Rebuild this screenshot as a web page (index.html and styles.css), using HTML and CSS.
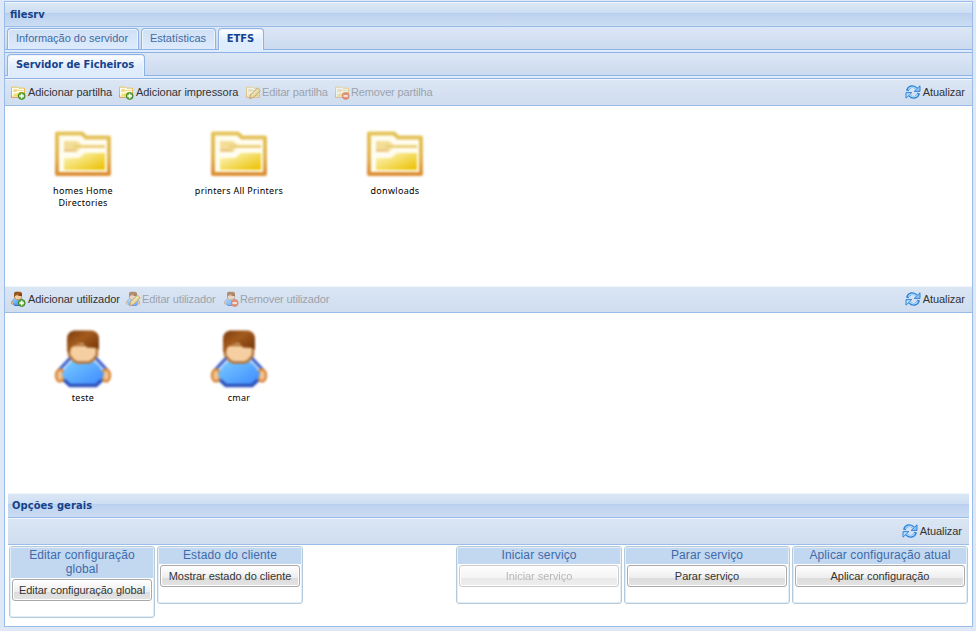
FILE: index.html
```html
<!DOCTYPE html>
<html lang="pt">
<head>
<meta charset="utf-8">
<title>filesrv</title>
<link rel="stylesheet" href="styles.css">
</head>
<body>
<svg class="defs" aria-hidden="true">
  <defs>
    <linearGradient id="gold" x1="0" y1="0" x2="0" y2="1"><stop offset="0" stop-color="#e5c45a"/><stop offset=".6" stop-color="#e2b455"/><stop offset="1" stop-color="#dc8f35"/></linearGradient>
    <linearGradient id="yellow" x1="0" y1="0" x2="1" y2="1"><stop offset=".1" stop-color="#fbf3b4"/><stop offset=".9" stop-color="#edc50f"/></linearGradient>
    <linearGradient id="shirt" x1="0" y1="0" x2="1" y2="1"><stop offset="0" stop-color="#79ccff"/><stop offset="1" stop-color="#3a87ff"/></linearGradient>
    <linearGradient id="hair" x1="0" y1="0" x2="1" y2="1"><stop offset="0" stop-color="#7c3b0c"/><stop offset=".4" stop-color="#a35a1c"/><stop offset="1" stop-color="#6b3005"/></linearGradient>
    <symbol id="folder" viewBox="0 0 64 64">
      <path d="M6 12.500H31L35 16.500H58V53H6Z" fill="#fffdf0" stroke="url(#gold)" stroke-width="4" stroke-linejoin="round"/>
      <path d="M13 20H26L31 24H54V27H29L26 31H13Z" fill="#f3de98"/>
      <path d="M22 25.500H54" stroke="#ecd07c" stroke-width="3"/>
      <path d="M13 29.500H25" stroke="#edc888" stroke-width="3"/>
      <path d="M13 37H28L34 32H54V49H13Z" fill="url(#yellow)"/>
    </symbol>
    <symbol id="user" viewBox="0 0 64 64">
      <path d="M20 29L8 42V50H56V42L44 29Z" fill="#c4dcfb" stroke="#3e62ca" stroke-width="3"/>
      <ellipse cx="9" cy="47.500" rx="4" ry="6" fill="#f0c394" stroke="#d98a3c" stroke-width="2.500"/>
      <ellipse cx="55" cy="47.500" rx="4" ry="6" fill="#f0c394" stroke="#d98a3c" stroke-width="2.500"/>
      <path d="M22 33H42L48 38L53 46L49 56L45 58.500H19L15 56L11 46L16 38Z" fill="url(#shirt)"/>
      <path d="M13 52L19 57.500H45L51 52" fill="none" stroke="#2f52bb" stroke-width="3.500"/>
      <path d="M18 17H46V27L42 32L38 34.500H26L22 32L18 27Z" fill="#f5cfa2" stroke="#b37338" stroke-width="2.500"/>
      <path d="M23 2.500H41Q48 3.500 48 11V22L46 20L36 19.500L32 15L25 16L20 20L18 26L16 23V11Q16 3.500 23 2.500Z" fill="url(#hair)"/>
    </symbol>
    <symbol id="refresh" viewBox="0 0 16 16">
      <path d="M2.300 6.800C3.500 2 8.500 1.200 11.700 4.600" fill="none" stroke="#2f83da" stroke-width="2.700"/>
      <path d="M15 1.800V7.400H9.200Z" fill="#8cc6f8" stroke="#2779d0" stroke-width=".9"/>
      <path d="M3.200 5.600C5 2.600 8.600 2.400 11.400 5" fill="none" stroke="#a9dcff" stroke-width="1.200"/>
      <path d="M13.700 9.200C12.500 14 7.500 14.800 4.300 11.400" fill="none" stroke="#2f83da" stroke-width="2.700"/>
      <path d="M1 14.200V8.600H6.800Z" fill="#b5ddfb" stroke="#2779d0" stroke-width=".9"/>
      <path d="M12.800 10.400C11 13.400 7.400 13.600 4.600 11" fill="none" stroke="#a9dcff" stroke-width="1.200"/>
    </symbol>
    <symbol id="plus" viewBox="0 0 16 16"><circle cx="11.700" cy="12" r="3.400" fill="#76b852" stroke="#3c8425"/><path d="M9.500 12H13.900M11.700 9.800V14.200" stroke="#fff" stroke-width="1.300"/></symbol>
    <symbol id="minus" viewBox="0 0 16 16"><circle cx="11.700" cy="12" r="3.400" fill="#f0622c" stroke="#d9501f"/><path d="M9.500 12H13.900" stroke="#fff" stroke-width="1.600"/></symbol>
    <symbol id="pencil" viewBox="0 0 16 16"><path d="M4.500 14.800L5.800 10.600L12.300 4.100L15.200 6.800L8.600 13.400Z" fill="#f5d568" stroke="#bd8127"/><path d="M7 11.500L13 5.500" stroke="#fff2a6"/></symbol>
  </defs>
</svg>

<div class="window">
  <div class="title">filesrv</div>
  <div class="tabs">
    <div class="tab info"><span>Informação do servidor</span></div>
    <div class="tab stats"><span>Estatísticas</span></div>
    <div class="tab active etfs"><span>ETFS</span></div>
  </div>
  <div class="spacer"></div>
  <div class="tabs second">
    <div class="tab active files"><span>Servidor de Ficheiros</span></div>
  </div>
  <div class="spacer"></div>

  <div class="toolbar">
    <div class="tool w108"><svg><use href="#folder"/><use href="#plus"/></svg><span>Adicionar partilha</span></div>
    <div class="tool w127"><svg><use href="#folder"/><use href="#plus"/></svg><span>Adicionar impressora</span></div>
    <div class="tool w89 disabled"><svg><use href="#folder"/><use href="#pencil"/></svg><span>Editar partilha</span></div>
    <div class="tool disabled"><svg><use href="#folder"/><use href="#minus"/></svg><span>Remover partilha</span></div>
    <div class="tool refresh"><svg><use href="#refresh"/></svg><span>Atualizar</span></div>
  </div>
  <div class="items shares">
    <div class="item"><svg><use href="#folder"/></svg><span>homes Home Directories</span></div>
    <div class="item"><svg><use href="#folder"/></svg><span>printers All Printers</span></div>
    <div class="item"><svg><use href="#folder"/></svg><span>donwloads</span></div>
  </div>

  <div class="toolbar">
    <div class="tool w115"><svg><use href="#user"/><use href="#plus"/></svg><span>Adicionar utilizador</span></div>
    <div class="tool w98 disabled"><svg><use href="#user"/><use href="#pencil"/></svg><span>Editar utilizador</span></div>
    <div class="tool disabled"><svg><use href="#user"/><use href="#minus"/></svg><span>Remover utilizador</span></div>
    <div class="tool refresh"><svg><use href="#refresh"/></svg><span>Atualizar</span></div>
  </div>
  <div class="items users">
    <div class="item"><svg><use href="#user"/></svg><span>teste</span></div>
    <div class="item"><svg><use href="#user"/></svg><span>cmar</span></div>
  </div>

  <div class="options">
    <div class="title">Opções gerais</div>
    <div class="toolbar"><div class="tool refresh"><svg><use href="#refresh"/></svg><span>Atualizar</span></div></div>
    <div class="groups">
      <div class="group"><h3>Editar configuração global</h3><button>Editar configuração global</button></div>
      <div class="group"><h3>Estado do cliente</h3><button>Mostrar estado do cliente</button></div>
      <div class="gap"></div>
      <div class="group"><h3>Iniciar serviço</h3><button disabled>Iniciar serviço</button></div>
      <div class="group"><h3>Parar serviço</h3><button>Parar serviço</button></div>
      <div class="group"><h3>Aplicar configuração atual</h3><button>Aplicar configuração</button></div>
    </div>
  </div>
</div>
</body>
</html>
```

FILE: styles.css
```css
* { box-sizing: border-box; }
body { margin: 0; height: 631px; padding: 1px 3px 4px 4px; overflow: hidden; background: #dfe8f6; font: 11px "Liberation Sans", Arial, sans-serif; color: #333; }
.defs { position: absolute; width: 0; height: 0; }
.window { width: 969px; height: 626px; border: 1px solid #99bce8; background: #fff; }
.title { height: 25px; padding: 1px 5px 0; border-bottom: 1px solid #99bce8; background: linear-gradient(#dce8f5, #cddef3 45%, #b3cbec 46%, #bdd2ef 50%, #cbddf3); box-shadow: inset 0 1px #f0f5fb; font: bold 11px/24px "DejaVu Sans Condensed", "DejaVu Sans", sans-serif; color: #15428b; }
.options .title { padding-left: 4px; letter-spacing: .1px; }
.tabs { display: flex; gap: 2px; height: 23px; padding: 1px 2px 0; border-bottom: 1px solid #8db2e3; background: linear-gradient(#dde7f6, #cbdaee); }
.tab { height: 21px; border: 1px solid #8db2e3; border-bottom: 0; border-radius: 4px 4px 0 0; background: linear-gradient(#cfdff5, #deebfd); box-shadow: inset 1px 1px #edf4fd, inset -1px 0 #edf4fd; line-height: 19px; text-align: center; letter-spacing: -.02px; color: #416aa3; }
.tabs .active { height: 22px; margin-bottom: -1px; background: linear-gradient(#fff, #deecfd 60%); font: bold 11px/19px "DejaVu Sans Condensed", "DejaVu Sans", sans-serif; letter-spacing: -.03px; color: #15428b; }
.info { width: 132px; padding-right: 2px; }
.stats { width: 75px; padding-right: 1px; }
.etfs { width: 46px; padding-right: 1px; }
.files { width: 138px; padding-right: 2px; }
.spacer { height: 3px; background: #deecfd; border-bottom: 1px solid #8db2e3; }
.toolbar { display: flex; align-items: center; height: 27px; padding: 0 7px 0 5px; border-bottom: 1px solid #99bce8; background: linear-gradient(#dce6f4, #cfddef); box-shadow: inset 0 1px #f0f5fb; }
.tool { display: flex; align-items: center; gap: 2px; white-space: nowrap; letter-spacing: -.05px; }
.tool svg { flex: none; width: 16px; height: 16px; }
.w108 { width: 108px; }
.w127 { width: 127px; }
.w89 { width: 89px; }
.w115 { width: 115px; }
.w98 { width: 98px; }
.disabled { gap: 1px; letter-spacing: -.14px; color: #9ca3ac; }
.disabled svg { opacity: .6; }
.refresh { gap: 2px; margin-left: auto; }
.items { display: flex; height: 180px; background: #fff; }
.item { display: flex; flex-direction: column; align-items: center; width: 156px; padding-top: 15px; text-align: center; font: 9px/12px "Noto Sans", sans-serif; letter-spacing: .3px; color: #000; }
.item svg { width: 64px; height: 64px; filter: blur(.9px); }
.item span { width: 92px; }
.options { padding: 0 3px; }
.groups { display: grid; grid-template-columns: 146px 146px 149px 166px 166px 176px; gap: 2px; padding: 1px 1px 0; align-items: start; }
.group { height: 58px; border: 1px solid #b5cbdc; border-radius: 3px; padding: 1px; box-shadow: inset 0 0 0 1px #e3edf6; }
.group:first-child { height: 72px; }
.group h3 { margin: 0; padding: 0 2px 2px; background: #c2d8f0; font-size: 12px; font-weight: normal; line-height: 14px; letter-spacing: .12px; text-align: center; color: #3e6aaa; }
button { display: block; width: calc(100% - 2px); height: 22px; margin: 1px; padding: 0; border: 1px solid #a9a9a9; border-radius: 3px; background: linear-gradient(#fff, #eee 58%, #dcdcdc 60%, #e4e4e4); box-shadow: inset 0 0 0 1px #fff; font: 11px "Liberation Sans", Arial, sans-serif; letter-spacing: -.04px; color: #333; white-space: nowrap; }
button:disabled { opacity: .6; color: #888; }
```
